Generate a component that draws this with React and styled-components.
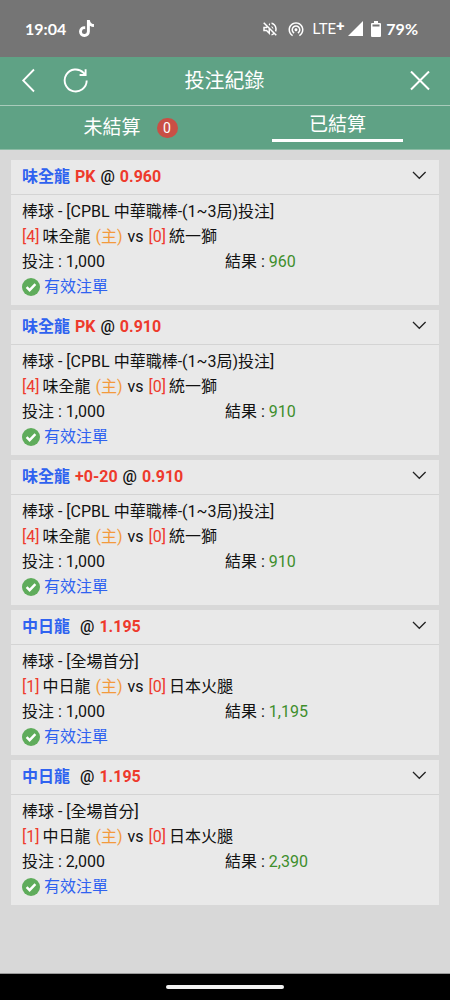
import React, { useState } from "react";
import styled, { createGlobalStyle } from "styled-components";
import { FaTiktok } from "react-icons/fa6";
import { MdOutlineVolumeOff, MdWifiTethering } from "react-icons/md";

const Global = createGlobalStyle`
  * { box-sizing: border-box; }
  body {
    margin: 0;
    background: #d8d8d8;
    color: #111;
    font-family: Roboto, "Noto Sans CJK TC", sans-serif;
    font-size: 16px;
  }
  button { font: inherit; color: inherit; background: none; border: 0; padding: 0; cursor: pointer; }
  svg { display: block; }
`;

const Screen = styled.div`
  min-height: 100vh;
  display: flex;
  flex-direction: column;
`;

const StatusBar = styled.div`
  height: 57px;
  padding: 0 32px 0 25px;
  display: flex;
  align-items: center;
  justify-content: space-between;
  background: #757575;
  color: #fff;
`;

const StatusGroup = styled.div`
  display: flex;
  align-items: center;
  gap: ${(p) => p.$gap}px;
`;

const StatusText = styled.span`
  font-family: Lato, sans-serif;
  font-size: 16px;
  font-weight: 700;
  line-height: 20px;
`;

const NetworkText = styled.span`
  display: flex;
  font-size: 15px;
  line-height: 20px;
`;

const Plus = styled.span`
  font-weight: 700;
  line-height: 14px;
`;

const Header = styled.header`
  height: 49px;
  padding: 0 20px 0 19px;
  display: grid;
  grid-template-columns: 1fr auto 1fr;
  align-items: center;
  background: #5fa285;
  border-bottom: 1px solid #a9cbbb;
  color: #fff;
`;

const HeaderSide = styled.div`
  display: flex;
  gap: 24px;
  justify-content: ${(p) => (p.$end ? "flex-end" : "flex-start")};
`;

const Title = styled.h1`
  margin: 0;
  font-size: 20px;
  line-height: 28px;
  font-weight: 400;
`;

const Tabs = styled.nav`
  height: 44px;
  display: grid;
  grid-template-columns: 1fr 1fr;
  background: #5fa285;
  border-bottom: 1px solid #8dbba5;
  color: #fff;
`;

const Tab = styled.button`
  display: flex;
  align-items: center;
  justify-content: center;
  gap: 16px;
  && {
    padding-left: ${(p) => (p.$active ? 0 : 36)}px;
    font-size: 19px;
    line-height: 28px;
  }
`;

const ActiveLabel = styled.span`
  width: 131px;
  margin-bottom: 7px;
  padding-top: 5px;
  border-bottom: 3px solid #fff;
`;

const Badge = styled.span`
  width: 21px;
  height: 20px;
  border-radius: 10px;
  background: #c94f45;
  font-size: 14px;
  line-height: 20px;
  text-align: center;
`;

const List = styled.main`
  flex: 1;
  padding: 10px 11px;
  display: flex;
  flex-direction: column;
  gap: 5px;
`;

const Card = styled.article`
  background: #e9e9e9;
`;

const CardHead = styled.div`
  height: 35px;
  padding: 0 12px 0 11px;
  display: flex;
  align-items: center;
  justify-content: space-between;
  border-bottom: 1px solid #d4d4d4;
`;

const Pick = styled.h2`
  margin: 0;
  display: flex;
  gap: 5px;
  font-size: 16px;
  line-height: 24px;
  font-weight: 700;
`;

const tones = { blue: "#2f62f0", red: "#ee3a2c", orange: "#f39a3c", green: "#3e8e2c" };

const Tone = styled.span`
  color: ${(p) => tones[p.$tone]};
`;

const At = styled.span`
  font-weight: 500;
`;

const CardBody = styled.div`
  padding: 4px 11px 6px;
  line-height: 25px;
`;

const Line = styled.div`
  display: flex;
  gap: ${(p) => p.$gap || 0}px;
  height: 25px;
  align-items: center;
`;

const Team = styled.span`
  display: flex;
  gap: 3px;
`;

const Amounts = styled.div`
  display: grid;
  grid-template-columns: 1fr 1fr;
`;

const Toggle = ({ open, onClick }) => (
  <button type="button" aria-label="詳情" aria-expanded={open} onClick={onClick}>
    <svg width="16" height="14" viewBox="0 0 16 14" fill="none" stroke="#222" strokeWidth="1.3">
      <path d="M2 2 8.300 8.300 14.600 2" />
    </svg>
  </button>
);

const HomeBar = styled.div`
  height: 27px;
  display: flex;
  align-items: center;
  justify-content: center;
  background: #000;
  border-top: 1px solid #999;
`;

const HomePill = styled.span`
  width: 118px;
  height: 4px;
  border-radius: 2px;
  background: #f2f2f2;
`;

const bets = [
  { team: "味全龍", line: "PK", odds: "0.960", event: "棒球 - [CPBL 中華職棒-(1~3局)投注]", score: 4, away: "統一獅", stake: "1,000", result: "960" },
  { team: "味全龍", line: "PK", odds: "0.910", event: "棒球 - [CPBL 中華職棒-(1~3局)投注]", score: 4, away: "統一獅", stake: "1,000", result: "910" },
  { team: "味全龍", line: "+0-20", odds: "0.910", event: "棒球 - [CPBL 中華職棒-(1~3局)投注]", score: 4, away: "統一獅", stake: "1,000", result: "910" },
  { team: "中日龍", line: "", odds: "1.195", event: "棒球 - [全場首分]", score: 1, away: "日本火腿", stake: "1,000", result: "1,195" },
  { team: "中日龍", line: "", odds: "1.195", event: "棒球 - [全場首分]", score: 1, away: "日本火腿", stake: "2,000", result: "2,390" },
];

function BetCard({ bet }) {
  const [open, setOpen] = useState(true);
  return (
    <Card>
      <CardHead>
        <Pick>
          <Tone $tone="blue">{bet.team}</Tone>
          <Tone $tone="red">{bet.line}</Tone>
          <At>@</At>
          <Tone $tone="red">{bet.odds}</Tone>
        </Pick>
        <Toggle open={open} onClick={() => setOpen(!open)} />
      </CardHead>
      {open && (
        <CardBody>
          <Line>{bet.event}</Line>
          <Line $gap={5}>
            <Team>
              <Tone $tone="red">[{bet.score}]</Tone>
              <span>{bet.team}</span>
            </Team>
            <Tone $tone="orange">(主)</Tone>
            <span>vs</span>
            <Team>
              <Tone $tone="red">[0]</Tone>
              <span>{bet.away}</span>
            </Team>
          </Line>
          <Amounts>
            <span>投注 : {bet.stake}</span>
            <span>結果 : <Tone $tone="green">{bet.result}</Tone></span>
          </Amounts>
          <Line $gap={4}>
            <svg width="18" height="18" viewBox="0 0 18 18">
              <circle cx="9" cy="9" r="9" fill="#5fac5b" />
              <path d="M4.6 9.2 7.6 12.2 13.4 6.2" fill="none" stroke="#fff" strokeWidth="2.4" />
            </svg>
            <Tone $tone="blue">有效注單</Tone>
          </Line>
        </CardBody>
      )}
    </Card>
  );
}

export default function App() {
  return (
    <Screen>
      <Global />
      <StatusBar>
        <StatusGroup $gap={12}>
          <StatusText>19:04</StatusText>
          <FaTiktok size={17} />
        </StatusGroup>
        <StatusGroup $gap={8}>
          <MdOutlineVolumeOff size={18} />
          <MdWifiTethering size={18} />
          <StatusGroup $gap={4}>
            <NetworkText>LTE<Plus>+</Plus></NetworkText>
            <svg width="15" height="15" viewBox="0 0 15 15"><path d="M15 0v15H0Z" fill="#fff" /></svg>
          </StatusGroup>
          <StatusGroup $gap={5}>
            <svg width="10" height="16" viewBox="0 0 10 16">
              <path fill="#fff" fillRule="evenodd" d="M3 0h4v2h2q1 0 1 1v12q0 1-1 1H1q-1 0-1-1V3q0-1 1-1h2ZM1.500 3.500v2h7v-2Z" />
            </svg>
            <StatusText>79%</StatusText>
          </StatusGroup>
        </StatusGroup>
      </StatusBar>
      <Header>
        <HeaderSide>
          <button type="button" aria-label="返回">
            <svg width="20" height="26" viewBox="0 0 20 26" fill="none" stroke="#fff" strokeWidth="1.800">
              <path d="M15 1.500 4.200 12.500 15 23.500" />
            </svg>
          </button>
          <button type="button" aria-label="重新整理">
            <svg width="26" height="26" viewBox="0 0 26 26" fill="none" stroke="#fff" strokeWidth="1.900">
              <path d="M23.700 12.500A11 11 0 1 1 20.600 4.800L22.500 6.800M22.600 1.300V7H16.600" />
            </svg>
          </button>
        </HeaderSide>
        <Title>投注紀錄</Title>
        <HeaderSide $end>
          <button type="button" aria-label="關閉">
            <svg width="20" height="20" viewBox="0 0 20 20" fill="none" stroke="#fff" strokeWidth="2">
              <path d="M1 .5 19 18.500M19 .5 1 18.500" />
            </svg>
          </button>
        </HeaderSide>
      </Header>
      <Tabs>
        <Tab type="button">未結算<Badge>0</Badge></Tab>
        <Tab type="button" $active><ActiveLabel>已結算</ActiveLabel></Tab>
      </Tabs>
      <List>
        {bets.map((bet, i) => <BetCard key={i} bet={bet} />)}
      </List>
      <HomeBar><HomePill /></HomeBar>
    </Screen>
  );
}
